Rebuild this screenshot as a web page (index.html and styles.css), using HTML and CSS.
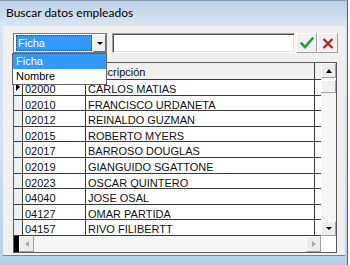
FILE: index.html
```
<!DOCTYPE html>
<html>
<head>
<meta charset="utf-8">
<link rel="stylesheet" href="styles.css">
</head>
<body>
<div class="window">
  <div class="titlebar">Buscar datos empleados</div>
  <div class="client">
    <div class="toolbar">
      <div class="combo">
        <div class="combo-value"><span class="combo-sel">Ficha</span></div>
        <div class="combo-btn"><span class="tri-down"></span></div>
        <ul class="combo-list">
          <li class="sel">Ficha</li>
          <li>Nombre</li>
        </ul>
      </div>
      <div class="search"></div>
      <div class="tbtn ok">
        <svg width="14" height="12" viewBox="0 0 14 12"><path d="M1.5 6.5 L5 10 L12.5 1.5" fill="none" stroke="#2f9a35" stroke-width="2.6" stroke-linecap="square"/></svg>
      </div>
      <div class="tbtn cancel">
        <svg width="12" height="11" viewBox="0 0 12 11"><path d="M1.5 1 L10.5 10 M10.5 1 L1.5 10" fill="none" stroke="#b3262a" stroke-width="2.4"/></svg>
      </div>
    </div>
    <div class="grid">
      <div class="data">
        <div class="row head"><div class="ind"></div><div class="c1">Ficha</div><div class="c2">Descripción</div></div>
        <div class="row"><div class="ind"><span class="tri-right"></span></div><div class="c1">02000</div><div class="c2">CARLOS MATIAS</div></div>
        <div class="row"><div class="ind"></div><div class="c1">02010</div><div class="c2">FRANCISCO URDANETA</div></div>
        <div class="row"><div class="ind"></div><div class="c1">02012</div><div class="c2">REINALDO GUZMAN</div></div>
        <div class="row"><div class="ind"></div><div class="c1">02015</div><div class="c2">ROBERTO MYERS</div></div>
        <div class="row"><div class="ind"></div><div class="c1">02017</div><div class="c2">BARROSO DOUGLAS</div></div>
        <div class="row"><div class="ind"></div><div class="c1">02019</div><div class="c2">GIANGUIDO SGATTONE</div></div>
        <div class="row"><div class="ind"></div><div class="c1">02023</div><div class="c2">OSCAR QUINTERO</div></div>
        <div class="row"><div class="ind"></div><div class="c1">04040</div><div class="c2">JOSE OSAL</div></div>
        <div class="row"><div class="ind"></div><div class="c1">04127</div><div class="c2">OMAR PARTIDA</div></div>
        <div class="row"><div class="ind"></div><div class="c1">04157</div><div class="c2">RIVO FILIBERTT</div></div>
      </div>
      <div class="vscroll">
        <div class="sbtn"><span class="tri-up"></span></div>
        <div class="thumb"></div>
        <div class="vtrack"></div>
        <div class="sbtn"><span class="tri-down"></span></div>
      </div>
      <div class="hscroll">
        <div class="hblack"></div>
        <div class="sbtn h"><span class="tri-left"></span></div>
        <div class="htrack"></div>
        <div class="sbtn h"><span class="tri-rt"></span></div>
      </div>
      <div class="corner"></div>
    </div>
  </div>
</div>
</body>
</html>
```
FILE: styles.css
```
html, body {
  margin: 0;
  padding: 0;
}
body {
  width: 350px;
  height: 265px;
  overflow: hidden;
  background: #ffffff;
  font-family: "Liberation Sans", Arial, sans-serif;
  font-size: 11px;
  color: #111;
}
.window {
  width: 348px;
  height: 265px;
  box-sizing: border-box;
  border-top: 1px solid #8c9fb4;
  border-right: 1px solid #4f6175;
  background: linear-gradient(#bcd0e8 0px, #d9e5f3 25px, #d0deee 150px, #b5cfea 100%);
  display: flex;
  flex-direction: column;
}
.titlebar {
  height: 25px;
  line-height: 24px;
  padding-left: 6px;
  font-family: Lato, "Noto Sans", sans-serif;
  font-size: 12px;
  color: #000;
}
.client {
  margin: 0 2px 0 3px;
  height: 230px;
  box-sizing: border-box;
  background: #f0f0f0;
  border-bottom: 1px solid #6d87a3;
  padding-top: 7px;
}
.toolbar {
  display: flex;
  align-items: flex-start;
  padding-left: 10px;
  height: 20px;
}
.combo {
  position: relative;
  width: 94px;
  height: 20px;
  box-sizing: border-box;
  border: 1px solid #7a7a7a;
  background: #fff;
  display: flex;
  padding: 0;
}
.combo-value {
  flex: 1;
  padding: 1px 1px 1px 2px;
}
.combo-sel {
  display: block;
  height: 16px;
  line-height: 16px;
  background: #3399ff;
  color: #fff;
  padding-left: 2px;
  outline: 1px dotted #1f4f8a;
  outline-offset: -1px;
}
.combo-btn {
  width: 13px;
  height: 18px;
  box-sizing: border-box;
  background: #f0f0f0;
  border: 1px solid;
  border-color: #fff #6a6a6a #6a6a6a #fff;
  display: flex;
  align-items: center;
  justify-content: center;
}
.combo-list {
  position: absolute;
  left: -2px;
  top: 19px;
  width: 95px;
  box-sizing: border-box;
  margin: 0;
  padding: 0;
  list-style: none;
  background: #fff;
  border: 1px solid #646464;
  z-index: 5;
}
.combo-list li {
  height: 15px;
  line-height: 15px;
  padding-left: 3px;
  color: #000;
}
.combo-list li.sel {
  background: #3399ff;
  color: #fff;
}
.search {
  margin-left: 5px;
  width: 183px;
  height: 20px;
  box-sizing: border-box;
  background: #fff;
  border: 1px solid;
  border-color: #a0a0a0 #ffffff #ffffff #a0a0a0;
  box-shadow: inset 1px 1px 0 #505050, inset -1px -1px 0 #e3e3e3;
}
.tbtn {
  width: 21px;
  height: 20px;
  box-sizing: border-box;
  background: #f0f0f0;
  border: 1px solid;
  border-color: #ffffff #a0a0a0 #a0a0a0 #ffffff;
  display: flex;
  align-items: center;
  justify-content: center;
}
.tbtn.ok { margin-left: 1px; }
.tbtn.cancel { margin-left: 0; }
.grid {
  margin: 9px 0 0 10px;
  width: 324px;
  height: 191px;
  box-sizing: border-box;
  border: 1px solid #5a5a5a;
  display: grid;
  grid-template-columns: 307px 15px;
  grid-template-rows: 173px 16px;
  background: #fff;
}
.data {
  overflow: hidden;
  background: #fff;
}
.row {
  display: flex;
  height: 15.6px;
  box-sizing: border-box;
  border-bottom: 1px solid #3a3a3a;
  line-height: 12px;
}
.row.head {
  height: 17px;
  background: #f0f0f0;
}
.ind {
  width: 8px;
  flex: none;
  border-right: 1px solid #3a3a3a;
  background: #f0f0f0;
  display: flex;
  align-items: center;
  padding-left: 2px;
  box-sizing: content-box;
  width: 6px;
}
.c1 {
  width: 60px;
  flex: none;
  padding: 3px 0 0 2px;
  border-right: 1px solid #3a3a3a;
  white-space: nowrap;
}
.c2 {
  width: 226px;
  flex: none;
  padding: 3px 0 0 2px;
  border-right: 1px solid #3a3a3a;
  white-space: nowrap;
}
.head .c1, .head .c2 {
  padding-top: 3px;
}
.tri-right {
  width: 0;
  height: 0;
  border-top: 4px solid transparent;
  border-bottom: 4px solid transparent;
  border-left: 4px solid #000;
}
.tri-down {
  width: 0;
  height: 0;
  border-left: 3px solid transparent;
  border-right: 3px solid transparent;
  border-top: 3px solid #000;
}
.tri-up {
  width: 0;
  height: 0;
  border-left: 3.5px solid transparent;
  border-right: 3.5px solid transparent;
  border-bottom: 4px solid #000;
}
.tri-left {
  width: 0;
  height: 0;
  border-top: 3.5px solid transparent;
  border-bottom: 3.5px solid transparent;
  border-right: 4px solid #a8a8a8;
}
.tri-rt {
  width: 0;
  height: 0;
  border-top: 3.5px solid transparent;
  border-bottom: 3.5px solid transparent;
  border-left: 4px solid #a8a8a8;
}
.vscroll {
  display: flex;
  flex-direction: column;
  background: #f5f5f5;
}
.sbtn {
  height: 15px;
  flex: none;
  box-sizing: border-box;
  background: #ececec;
  border: 1px solid;
  border-color: #ffffff #a0a0a0 #a0a0a0 #ffffff;
  display: flex;
  align-items: center;
  justify-content: center;
}
.sbtn.h {
  width: 15px;
  height: 16px;
}
.thumb {
  margin-top: 2px;
  height: 13px;
  box-sizing: border-box;
  background: #f0f0f0;
  border: 1px solid;
  border-color: #ffffff #a0a0a0 #a0a0a0 #ffffff;
}
.vtrack { flex: 1; }
.hscroll {
  display: flex;
  background: #f5f5f5;
}
.hblack {
  width: 5px;
  background: #000;
}
.htrack { flex: 1; }
.corner {
  background: #ffffff;
}
```
